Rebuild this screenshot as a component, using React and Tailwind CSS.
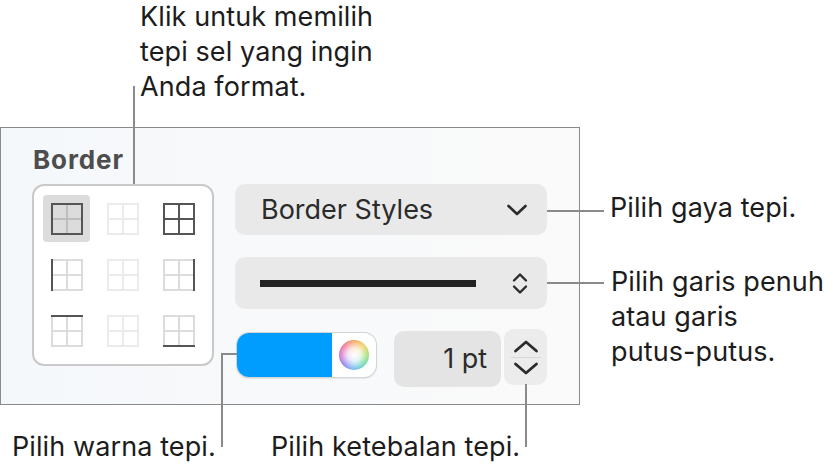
function Cell({ dark = [], light = false, selected = false }) {
  const base = light ? "#ebebeb" : "#dcdcdc";
  const ink = "#555555";
  const seg = {
    left: [1, 0, 1, 32], right: [31, 0, 31, 32], top: [0, 1, 32, 1], bottom: [0, 31, 32, 31],
    v: [16, 0, 16, 32], h: [0, 16, 32, 16],
  };
  const keys = ["left", "right", "top", "bottom", "v", "h"];
  const col = selected ? "#bdbdbd" : base;
  return (
    <div className={`flex h-[47px] w-[47px] items-center justify-center rounded-[4px] ${selected ? "bg-[#dcdcdc]" : ""}`}>
      <svg width="32" height="32" viewBox="0 0 32 32">
        {keys.filter(k => !dark.includes(k)).map(k => {
          const s = seg[k];
          return <line key={k} x1={s[0]} y1={s[1]} x2={s[2]} y2={s[3]} stroke={col} strokeWidth="2" />;
        })}
        {keys.filter(k => dark.includes(k)).map(k => {
          const s = seg[k];
          return <line key={k} x1={s[0]} y1={s[1]} x2={s[2]} y2={s[3]} stroke={ink} strokeWidth="2" />;
        })}
      </svg>
    </div>
  );
}
function Wheel() {
  return (
    <div className="h-[30px] w-[30px] rounded-full" style={{ background: "radial-gradient(circle, #ffffff 0%, rgba(255,255,255,0.8) 30%, rgba(255,255,255,0) 72%), conic-gradient(#f5a35c, #f0d060, #a0dc70, #60d8b0, #70b8f0, #8a80e8, #d070d0, #f07090, #f5a35c)" }} />
  );
}
const OUT = [
  <Cell key="a" selected dark={["left", "right", "top", "bottom"]} />,
  <Cell key="b" light />,
  <Cell key="c" dark={["left", "right", "top", "bottom", "v", "h"]} />,
  <Cell key="d" dark={["left"]} />,
  <Cell key="e" light />,
  <Cell key="f" dark={["right"]} />,
  <Cell key="g" dark={["top"]} />,
  <Cell key="h" light />,
  <Cell key="i" dark={["bottom"]} />,
];
function Note({ className, children }) {
  return <div className={`absolute whitespace-nowrap text-[27px] leading-[35px] tracking-[0.1px] text-[#1c1c1c] ${className}`}>{children}</div>;
}
function Rule({ className }) {
  return <div className={`absolute bg-[#8a8a8a] ${className}`} />;
}
export default function App() {
  return (
    <div className="relative h-[466px] w-[833px] overflow-hidden bg-white font-['Inter','Liberation_Sans',sans-serif]">
      <div className="absolute left-0 top-[127px] h-[278px] w-[580px] border border-[#8a8a8a] bg-gradient-to-r from-[#f5f8fb] to-[#fafafa] pl-[31px] pt-[15px]">
        <div className="pl-[1px] text-[26px] font-bold leading-[34px] tracking-[0.9px] text-[#4d4d4d]">Border</div>
        <div className="mt-[7px] flex items-start">
          <div className="grid h-[182px] w-[182px] grid-cols-[47px_47px_47px] grid-rows-[47px_47px_47px] content-start gap-[9px] rounded-[12px] border-2 border-[#c9c9c9] bg-white p-[9px]">
            {OUT}
          </div>
          <div className="ml-[21px] flex w-[312px] flex-col">
            <div className="flex h-[51px] items-center justify-between rounded-[10px] bg-[#e9e9e9] pl-[26px] pr-[20px] text-[27px] text-[#2b2b2b]">
              <span className="pt-[2px]">Border Styles</span>
              <svg width="20" height="12" viewBox="0 0 20 12" fill="none" stroke="#2b2b2b" strokeWidth="2.6" strokeLinecap="round" strokeLinejoin="round"><path d="M1.5 2l8.5 8 8.5-8" /></svg>
            </div>
            <div className="mt-[22px] flex h-[52px] items-center justify-between rounded-[10px] bg-[#e9e9e9] pl-[25px] pr-[19px]">
              <div className="h-[7px] w-[216px] bg-[#232323]" />
              <svg width="16" height="23" viewBox="0 0 16 23" fill="none" stroke="#2b2b2b" strokeWidth="2.4" strokeLinecap="round" strokeLinejoin="round"><path d="M2 8.5l6-6 6 6M2 14.5l6 6 6-6" /></svg>
            </div>
            <div className="mt-[20px] flex items-start">
              <div className="ml-[2px] mt-[4px] flex h-[44px] w-[139px] overflow-hidden rounded-[12px] bg-white shadow-[0_0_0_1px_#d4d4d4,0_1px_2px_rgba(0,0,0,0.25)]">
                <div className="w-[95px] bg-[#009dff]" />
                <div className="flex flex-1 items-center justify-center"><Wheel /></div>
              </div>
              <div className="ml-[18px] mt-[2px] flex h-[56px] w-[108px] items-center justify-end rounded-[10px] bg-[#e4e4e4] pr-[14px] text-[27px] text-[#2b2b2b]">1 pt</div>
              <div className="ml-[3px] flex h-[56px] w-[43px] flex-col items-center justify-center rounded-[10px] bg-[#ececec]">
                <svg width="26" height="14" viewBox="0 0 26 14" fill="none" stroke="#2b2b2b" strokeWidth="2.8" strokeLinecap="round" strokeLinejoin="round"><path d="M2.5 12L13 3l10.5 9" /></svg>
                <div className="my-[4px] h-px w-[30px] bg-[#d8d8d8]" />
                <svg width="26" height="14" viewBox="0 0 26 14" fill="none" stroke="#2b2b2b" strokeWidth="2.8" strokeLinecap="round" strokeLinejoin="round"><path d="M2.5 2L13 11l10.5-9" /></svg>
              </div>
            </div>
          </div>
        </div>
      </div>

      <Rule className="left-[133px] top-[86px] h-[98px] w-[2px]" />
      <Rule className="left-[547px] top-[210px] h-[2px] w-[57px]" />
      <Rule className="left-[547px] top-[282px] h-[2px] w-[57px]" />
      <Rule className="left-[221px] top-[353px] h-[94px] w-[2px]" />
      <Rule className="left-[221px] top-[353px] h-[2px] w-[16px]" />
      <Rule className="left-[525px] top-[384px] h-[63px] w-[2px]" />

      <Note className="left-[140px] top-[-1px]">Klik untuk memilih<br />tepi sel yang ingin<br />Anda format.</Note>
      <Note className="left-[610px] top-[190px]">Pilih gaya tepi.</Note>
      <Note className="left-[611px] top-[264px]">Pilih garis penuh<br />atau garis<br />putus-putus.</Note>
      <Note className="left-[12px] top-[429px]">Pilih warna tepi.</Note>
      <Note className="left-[271px] top-[429px]">Pilih ketebalan tepi.</Note>
    </div>
  );
}
